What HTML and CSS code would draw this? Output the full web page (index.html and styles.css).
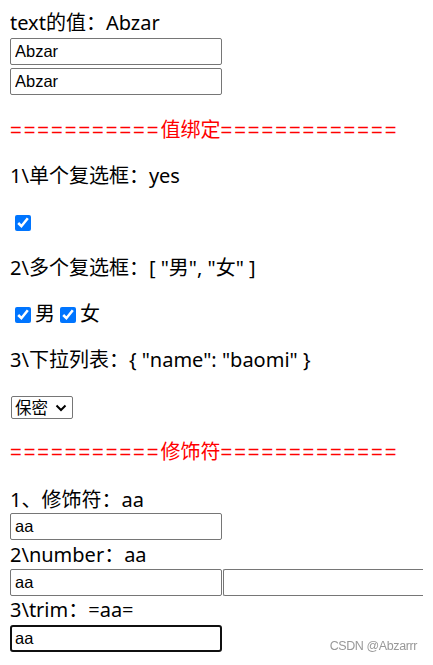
FILE: index.html
```html
<!DOCTYPE html>
<html lang="zh">
<head>
  <meta charset="UTF-8" />
  <title>v-model</title>
  <link rel="stylesheet" href="styles.css">
</head>
<body>

  <div id="app">
    <div class="line">text的值：Abzar</div>
    <input class="box first" value="Abzar" />
    <input class="box next" value="Abzar" />

    <p class="sep top"><span class="eq">===========</span>值绑定<span class="eq">=============</span></p>
    <p>1\单个复选框：yes</p>
    <p><input type="checkbox" checked /></p>
    <p>2\多个复选框：[ "男", "女" ]</p>
    <p>
      <label><input type="checkbox" checked />男</label><label><input type="checkbox" checked />女</label>
    </p>
    <p>3\下拉列表：{ "name": "baomi" }</p>
    <p>
      <select>
        <option>保密</option>
      </select>
    </p>
    <p class="sep"><span class="eq">===========</span>修饰符<span class="eq">=============</span></p>

    <div class="line mod">1、修饰符：aa</div>
    <input class="box" value="aa" />
    <div class="line num">2\number：aa</div>
    <div class="pair"><input class="box" value="aa" /><input class="box wide" /></div>
    <div class="line trim">3\trim：=aa=</div>
    <input class="box focus" value="aa" />
  </div>

  <div class="mark">CSDN @Abzarrr</div>

</body>
</html>
```

FILE: styles.css
```css
html { overflow: hidden; }
body { margin: 10px; font-family: "Noto Sans", "Noto Sans CJK SC", sans-serif; font-size: 20px; line-height: 26px; color: #000; background: #fff; }
p { margin: 0; padding-top: 20px; }
p.top { padding-top: 22px; }
.line { height: 26px; }
.line.mod { margin-top: 22px; }
.line.num { margin-top: 2px; }
.line.trim { margin-top: 1px; }

.box { display: block; box-sizing: border-box; width: 212px; height: 27px; margin: 0; padding: 0 4px; border: 1px solid #767676; border-radius: 2px; font-family: "Liberation Sans", sans-serif; font-size: 16.5px; color: #000; background: #fff; }
.box.first { margin-top: 2px; }
.box.next { margin-top: 3px; }
.box.focus { margin-top: 2px; border: 2px solid #101010; border-radius: 3px; padding: 0 3px; outline: none; }

.pair { display: flex; margin-top: 1px; margin-right: -10px; }
.pair .wide { flex: 1; width: auto; min-width: 0; margin-left: 1px; border-right: none; border-radius: 2px 0 0 2px; }

.sep { color: #ff0000; }
.eq { letter-spacing: 2px; font-family: "Liberation Sans", sans-serif; }

input[type="checkbox"] { width: 16px; height: 16px; margin: 0 4px 0 5px; vertical-align: -2px; accent-color: #0075ff; }

select { appearance: none; -webkit-appearance: none; box-sizing: border-box; width: 62px; height: 23px; margin-left: 1px; padding: 0 0 0 3px; font-family: "Noto Sans CJK SC", sans-serif; font-size: 16.5px; line-height: 21px; color: #000; border: 1px solid #767676; border-radius: 2px; vertical-align: middle;
  background: #fff url("data:image/svg+xml,%3Csvg xmlns='http://www.w3.org/2000/svg' width='12' height='8'%3E%3Cpath d='M1.5 1.5l4.5 4.5 4.5-4.5' fill='none' stroke='%23000' stroke-width='2'/%3E%3C/svg%3E") no-repeat right 5px center; }

.mark { position: fixed; right: 16px; bottom: 6px; font-family: "Liberation Sans", sans-serif; font-size: 12.5px; letter-spacing: -0.4px; color: #999; }
```
